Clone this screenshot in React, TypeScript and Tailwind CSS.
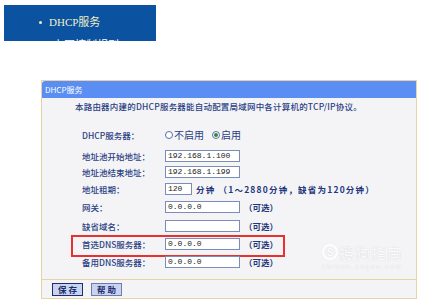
import React from "react";

const cjk = { fontFamily: '"Noto Sans CJK SC", "Noto Sans", sans-serif' };

function Input({ value, w = "w-[75px]" }: { value: string; w?: string }) {
  return (
    <div
      className={`${w} h-[12px] bg-white border border-[#7a8cb8] flex items-center pl-[2px] text-[8px] text-[#222] leading-none`}
      style={{ fontFamily: '"Liberation Mono", monospace' }}
    >
      {value}
    </div>
  );
}

function Row({
  label,
  mt,
  children,
  extra,
}: {
  label: string;
  mt: string;
  children: React.ReactNode;
  extra?: React.ReactNode;
}) {
  return (
    <div className={`relative h-[16px] flex items-center ${mt}`}>
      <div className="w-[123px] pl-[40px] text-[8.5px] text-[#2a4184] font-medium whitespace-nowrap">
        {label}
      </div>
      {children}
      {extra}
    </div>
  );
}

function Optional() {
  return (
    <span className="ml-[4px] text-[8.5px] text-[#23367a] font-bold whitespace-nowrap">（可选）</span>
  );
}

export default function App() {
  return (
    <div className="w-[422px] h-[301px] bg-white relative overflow-hidden" style={cjk}>
      {/* top nav */}
      <div className="ml-[4px] mt-[5px] w-[152px] h-[36px] bg-[#0b52a1] overflow-hidden">
        <div className="h-[34px] flex items-center pl-[35px]">
          <span className="w-[3px] h-[3px] rounded-full bg-[#f3f0b8] mr-[7px]" />
          <span className="text-[11px] text-[#f2f0c4] leading-none" style={{ fontFamily: '"Liberation Serif", "Noto Sans CJK SC", serif' }}>
            DHCP服务
          </span>
        </div>
        <div className="pl-[49px] text-[11px] text-white leading-none">上网控制规则</div>
      </div>

      {/* panel */}
      <div className="ml-[41px] mt-[39px] w-[376px] border border-[#e8d2a6]">
        <div className="h-[17px] bg-[#5b8ef3] rounded-tl-[3px] flex items-center pl-[3px] text-[8px] text-white leading-none">
          DHCP服务
        </div>
        <div className="bg-[#f4f4f6] pb-[9px]">
          <div className="h-[16px] flex items-center pl-[33px] text-[8.5px] text-[#2a4184] font-medium whitespace-nowrap tracking-[0.2px]">
            本路由器内建的DHCP服务器能自动配置局域网中各计算机的TCP/IP协议。
          </div>
          <Row label="DHCP服务器：" mt="mt-[13px]">
            <div className="flex items-center text-[10px] text-[#2a4184] leading-none">
              <span className="w-[8px] h-[8px] rounded-full border border-[#5670a8] bg-white mr-[1px]" />
              <span>不启用</span>
              <span className="ml-[8px] w-[8px] h-[8px] rounded-full border border-[#5670a8] bg-white mr-[1px] flex items-center justify-center">
                <span className="w-[4px] h-[4px] rounded-full bg-[#2f8a3c]" />
              </span>
              <span>启用</span>
            </div>
          </Row>
          <Row label="地址池开始地址：" mt="mt-[5px]">
            <Input value="192.168.1.100" />
          </Row>
          <Row label="地址池结束地址：" mt="mt-0">
            <Input value="192.168.1.199" />
          </Row>
          <Row label="地址租期：" mt="mt-[1px]">
            <Input value="120" w="w-[27px]" />
            <span className="ml-[4px] text-[8.5px] text-[#23367a] font-bold whitespace-nowrap tracking-[1.2px]">
              分钟 （1～2880分钟，缺省为120分钟）
            </span>
          </Row>
          <Row label="网关：" mt="mt-[2px]">
            <Input value="0.0.0.0" />
            <Optional />
          </Row>
          <Row label="缺省域名：" mt="mt-[3px]">
            <Input value="" />
            <Optional />
          </Row>
          <Row
            label="首选DNS服务器："
            mt="mt-[2px]"
            extra={
              <div className="absolute left-[29px] top-[-1px] w-[214px] h-[22px] border-2 border-[#e8302f]" />
            }
          >
            <Input value="0.0.0.0" />
            <Optional />
          </Row>
          <Row label="备用DNS服务器：" mt="mt-[2px]">
            <Input value="0.0.0.0" />
            <Optional />
          </Row>
        </div>
        <div className="border-t border-[#e8d2a6] bg-[#f4f4f6] h-[19px] flex items-center pl-[10px] gap-[8px]">
          <button className="w-[31px] h-[13px] bg-[#c9d3ef] border border-[#1d2d6e] text-[8.5px] text-[#1d2d6e] font-bold leading-none flex items-center justify-center">
            保 存
          </button>
          <button className="w-[31px] h-[13px] bg-[#c9d3ef] border border-[#6a7cb0] text-[8.5px] text-[#1d2d6e] font-bold leading-none flex items-center justify-center">
            帮 助
          </button>
        </div>
      </div>

      {/* watermark */}
      <div className="absolute left-[322px] top-[244px] flex flex-col items-center text-white/90" style={{ textShadow: "0 0 1px rgba(0,0,0,0.2)" }}>
        <div className="flex items-center">
          <svg width="16" height="16" viewBox="0 0 16 16" className="mr-[1px]">
            <circle cx="8" cy="8" r="7" fill="none" stroke="white" strokeWidth="1.3" />
            <text x="8" y="11.5" textAnchor="middle" fontSize="10" fontWeight="bold" fill="white" fontFamily="Liberation Sans, sans-serif">S</text>
          </svg>
          <span className="text-[15px] leading-none tracking-[1px]">搜狗指南</span>
        </div>
        <span className="text-[7px] tracking-[1.5px] mt-[3px] leading-none" style={{ fontFamily: '"Liberation Sans", sans-serif' }}>
          zhinan.sogou.com
        </span>
      </div>
    </div>
  );
}
